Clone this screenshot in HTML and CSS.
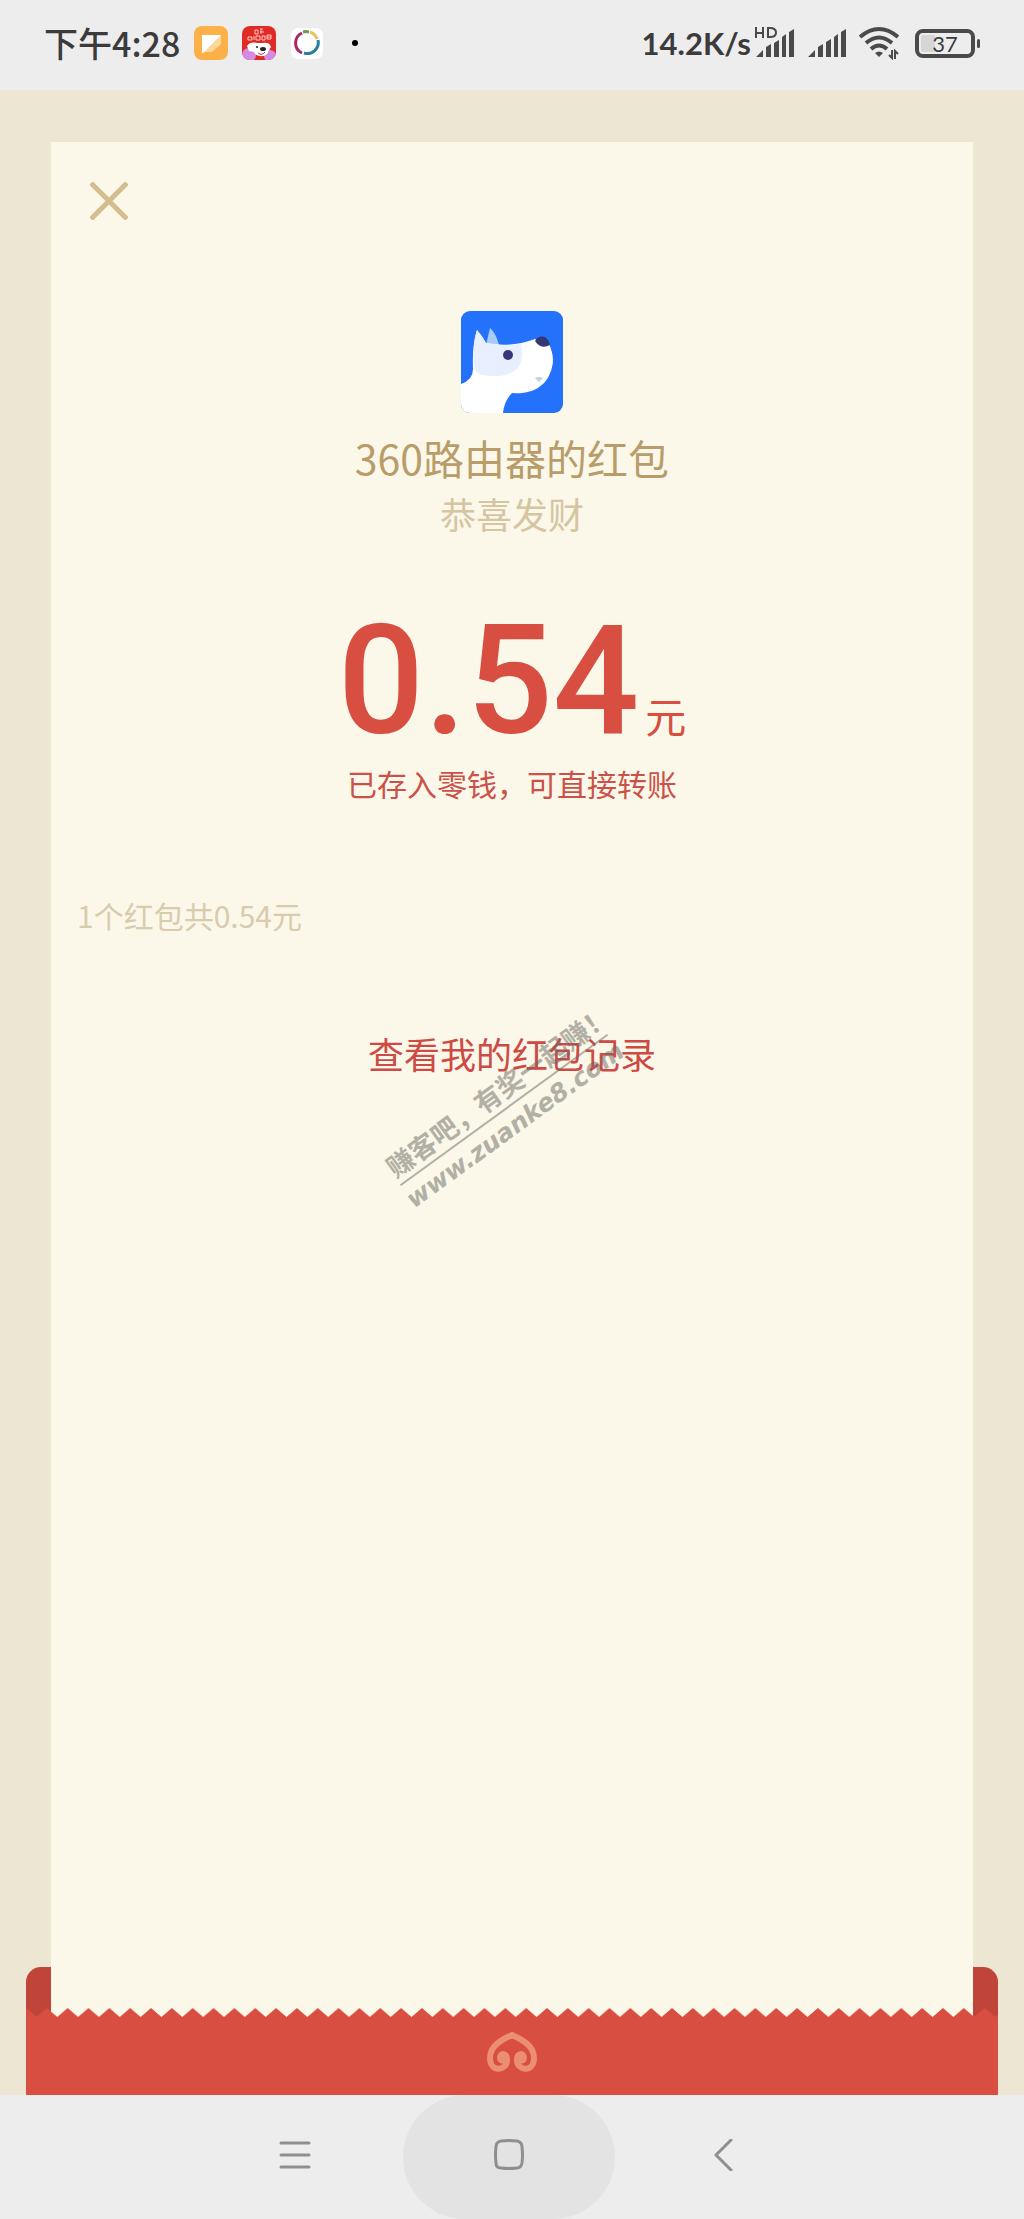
FILE: index.html
```html
<!DOCTYPE html>
<html lang="zh-CN">
<head>
<meta charset="utf-8">
<meta name="viewport" content="width=device-width, initial-scale=1">
<title>红包</title>
<link rel="stylesheet" href="styles.css">
</head>
<body>
<header class="status">
  <div class="status-left">
    <span class="time">下午4:28</span>
    <svg class="app" viewBox="0 0 34 34" aria-hidden="true">
      <rect width="34" height="34" rx="8" fill="#fbb04a"/>
      <path d="M8 9h19v9l-9 8H8z" fill="#fbd79b"/>
      <path d="M8 9h19L9 27H8z" fill="#fff"/>
    </svg>
    <svg class="app" viewBox="0 0 34 34" aria-hidden="true">
      <defs><clipPath id="app-clip"><rect width="34" height="34" rx="8"/></clipPath></defs>
      <g clip-path="url(#app-clip)">
        <rect width="34" height="34" fill="#e02a25"/>
        <path d="M13 4h3v4h-3zM18 3h3M18 6h4M19 3v5M6 11h4v3H6zM12 10v4M14 10h4v4h-4zM20 10h3v4h-3zM25 9h4v4h-4zM25 11h4" fill="none" stroke="#ffc9c0" stroke-width="1"/>
        <circle cx="7" cy="29" r="7" fill="#d58be4"/><circle cx="28" cy="30" r="6" fill="#d58be4"/>
        <path d="M5 20c2-4 7-4 10-3h6c4-1 7 0 8 4l-3 5c-1 6-13 5-14 0l-5-1z" fill="#fff"/>
        <circle cx="15" cy="21" r="1" fill="#222"/><ellipse cx="21" cy="23" rx="3" ry="2" fill="#222"/>
        <path d="M16 27q4 3 7-1" fill="none" stroke="#b33" stroke-width="1"/>
      </g>
    </svg>
    <svg class="app" viewBox="0 0 34 34" aria-hidden="true">
      <rect x="1" y="2" width="32" height="31" rx="7" fill="#fff"/>
      <g fill="none" stroke-width="3">
        <path d="M12 27A11 11 0 0 1 12 7" stroke="#b02367"/>
        <path d="M13 6A11 11 0 0 1 19 6" stroke="#6f9a4a"/>
        <path d="M20 6A11 11 0 0 1 27 13" stroke="#e5c560"/>
        <path d="M28 14A11 11 0 0 1 14 27" stroke="#27809d"/>
      </g>
    </svg>
    <i class="dot"></i>
  </div>
  <div class="status-right">
    <span class="speed">14.2K/s</span>
    <svg class="signal hd" viewBox="0 0 40 32" width="40" height="32" role="img" aria-label="HD">
      <path d="M1 0v11M8 0v11M1 6h7M13 1h2q6 0 6 4.500t-6 4.500h-2z" fill="none" stroke="#4a4a4a" stroke-width="2"/>
      <path d="M1 30l7-7v7zM11 30V20l5-3v13zM19 30V16l5-3v17zM27 30V10l4-3v23zM34 30V5l5-3v28z" fill="#4a4a4a"/>
    </svg>
    <svg class="signal" viewBox="0 0 40 32" width="40" height="32" aria-hidden="true">
      <path d="M1 30l7-7v7zM11 30V20l5-3v13zM19 30V15l5-3v18zM27 30V10l4-3v23zM34 30V5l5-3v28z" fill="#4a4a4a"/>
    </svg>
    <svg class="wifi" viewBox="0 0 40 34" width="40" height="34" aria-hidden="true">
      <g fill="none" stroke="#4a4a4a" stroke-width="4">
        <path d="M1 11Q20-5 39 11"/><path d="M7 17Q20 6 33 17"/><path d="M12 23Q20 16 28 23"/>
      </g>
      <path d="M16 27q4-3 8 0l-4 4z" fill="#4a4a4a"/>
      <path d="M33 24v8l-3-3M36 33v-8l3 3" fill="none" stroke="#4a4a4a" stroke-width="2"/>
    </svg>
    <span class="battery"><span class="battery-body">37</span><i class="battery-tip"></i></span>
  </div>
</header>

<main class="screen">
  <div class="envelope-back"></div>
  <section class="card">
    <button class="close" type="button" aria-label="关闭">
      <svg viewBox="0 0 38 38" width="38" height="38"><path d="M1 1L37 37M37 1L1 37" stroke="#d6bd90" stroke-width="5"/></svg>
    </button>
    <svg class="avatar" viewBox="0 0 102 102" width="102" height="102" aria-hidden="true">
      <defs><clipPath id="avatar-clip"><rect width="102" height="102" rx="9"/></clipPath></defs>
      <g clip-path="url(#avatar-clip)">
        <rect width="102" height="102" fill="#2472fb"/>
        <path d="M25 34L29 17Q35 22 38 34z" fill="#a9cbfb"/>
        <path d="M0 73Q12 69 12 58Q11 34 16 19Q22 26 25 32Q50 37 74 28L88 33Q94 46 91 56C87 75 71 84 51 82Q43 90 42 102H0z" fill="#fff"/>
        <path d="M16 19Q22 26 25 32Q42 36 60 33Q64 48 56 58Q44 68 21 64Q14 62 13 56Q11 34 16 19z" fill="#e8effe"/>
        <path d="M74 30Q77 24 84 26Q88 29 89 34Q80 39 74 30z" fill="#333a73"/>
        <circle cx="47" cy="44" r="5" fill="#363a78"/>
        <path d="M74 67q4-2 8 0l-4 4z" fill="#b9d4e8"/>
      </g>
    </svg>
    <h1 class="sender">360路由器的红包</h1>
    <p class="wish">恭喜发财</p>
    <p class="amount"><span class="value">0.54</span><span class="unit">元</span></p>
    <p class="saved">已存入零钱，可直接转账</p>
    <p class="count">1个红包共0.54元</p>
    <div class="records">
      <a class="records-link" href="#">查看我的红包记录</a>
      <div class="watermark"><span class="mark-slogan">赚客吧，有奖一起赚！</span><span class="mark-url">www.zuanke8.com</span></div>
    </div>
  </section>
  <svg class="zigzag" viewBox="0 0 972 9" preserveAspectRatio="none" aria-hidden="true">
    <defs><pattern id="teeth" width="20.84" height="9" patternUnits="userSpaceOnUse"><path d="M0 0L10.420 9L20.840 0V9H0z" fill="#d84e40"/></pattern></defs>
    <rect width="972" height="9" fill="url(#teeth)"/>
  </svg>
  <footer class="envelope-front">
    <svg viewBox="0 0 52 41" width="52" height="41" aria-hidden="true">
      <path d="M26 4C15 9 4 15 4 27C4 42 21 40 21 29C21 22 14 21 14 27C14 29 16 30 17 29M26 4C37 9 48 15 48 27C48 42 31 40 31 29C31 22 38 21 38 27C38 29 36 30 35 29" fill="none" stroke="#eb8e73" stroke-width="6" stroke-linejoin="round" stroke-linecap="round"/>
    </svg>
  </footer>
</main>

<nav class="nav">
  <button class="nav-button" type="button" aria-label="菜单"><svg viewBox="0 0 32 32" width="32" height="32"><path d="M2 4h28M2 16h28M2 28h28"/></svg></button>
  <button class="nav-button pressed" type="button" aria-label="主页"><svg viewBox="0 0 32 32" width="32" height="32"><path d="M8 2q8-1 16 0q5 1 5 6q1 8 0 16q-1 5-5 5q-8 1-16 0q-5 0-5-5q-1-8 0-16q0-5 5-6z"/></svg></button>
  <button class="nav-button" type="button" aria-label="返回"><svg viewBox="0 0 32 32" width="32" height="32"><path d="M24 1L9 16L24 31"/></svg></button>
</nav>
</body>
</html>
```
FILE: styles.css
```css
* { box-sizing: border-box; }

body {
  margin: 0;
  min-height: 100vh;
  display: flex;
  flex-direction: column;
  background: #ededed;
  font-family: "Noto Sans CJK SC", "Noto Sans", sans-serif;
}

h1, p { margin: 0; font-weight: 400; }
svg { display: block; flex: none; }
button { border: 0; padding: 0; background: none; }

/* Status bar */
.status {
  height: 90px;
  padding: 0 44px 4px;
  display: flex;
  justify-content: space-between;
  align-items: center;
  color: #3b3b3b;
}
.status-left, .status-right { display: flex; align-items: center; }
.status-left { gap: 14px; }
.status-right { gap: 12px; }
.time { font-size: 34px; line-height: 40px; font-weight: 500; }
.speed { font: 700 31px/40px Lato, sans-serif; }
.hd { margin-left: -8px; overflow: visible; }
.app { width: 34px; height: 34px; }
.dot { width: 6px; height: 6px; margin-left: 14px; border-radius: 50%; background: #000; }
.battery { display: flex; align-items: center; gap: 2px; margin-left: 4px; }
.battery-body {
  width: 60px;
  height: 29px;
  border: 4px solid #4a4a4a;
  border-radius: 8px;
  background: linear-gradient(to right, #d6d6d6 14px, transparent 14px) content-box;
  padding: 2px;
  font: 22px/17px Lato, sans-serif;
  text-align: center;
}
.battery-tip { width: 3px; height: 9px; border-radius: 2px; background: #4a4a4a; }

/* Opened envelope: the card stands between its back and its front */
.screen {
  flex: 1;
  display: grid;
  grid-template-columns: 26px 25px 1fr 25px 26px;
  grid-template-rows: 52px 1fr 41px 9px 78px;
  background: #ece6d2;
}
.envelope-back { grid-area: 3 / 2 / 6 / 5; background: #c1443b; border-radius: 15px 15px 0 0; }
.card {
  grid-area: 2 / 3 / 5 / 4;
  display: flex;
  flex-direction: column;
  align-items: center;
  background: #fbf8ea;
}
.zigzag { grid-area: 4 / 2 / 5 / 5; width: 100%; height: 9px; }
.envelope-front {
  grid-area: 5 / 2 / 6 / 5;
  display: flex;
  justify-content: center;
  align-items: flex-start;
  padding-top: 14px;
  background: #d84e40;
}

.close { align-self: flex-start; margin: 40px 0 0 39px; }
.avatar { margin-top: 91px; }
.sender { margin-top: 14px; font-size: 41px; line-height: 60px; color: #b89d6a; }
.wish { font-size: 36px; line-height: 52px; color: #d5c5a1; }
.amount {
  margin-top: 72px;
  display: flex;
  align-items: baseline;
  gap: 6px;
  color: #d84e40;
}
.value { font: 500 152px/140px Roboto, sans-serif; }
.unit { font-size: 41px; line-height: 60px; }
.saved { margin-top: 10px; font-size: 30px; line-height: 44px; color: #cb5149; }
.count { align-self: flex-start; margin: 88px 0 0 26px; font-size: 30px; line-height: 44px; color: #d9ccad; }
.records { position: relative; margin-top: 90px; }
.records-link { font-size: 36px; line-height: 52px; color: #ce4a45; text-decoration: none; }

.watermark {
  position: absolute;
  left: 8px;
  top: 46px;
  width: 256px;
  display: flex;
  flex-direction: column;
  align-items: center;
  transform: rotate(-36deg);
  color: #6b6a62;
  opacity: 0.5;
  font-weight: 700;
  white-space: nowrap;
}
.mark-slogan { width: 100%; border-bottom: 2px solid; font-size: 27px; line-height: 36px; }
.mark-url { font: italic 700 25px/36px "DejaVu Sans", sans-serif; }

/* System navigation */
.nav {
  height: 124px;
  padding-right: 6px;
  display: flex;
  justify-content: center;
  gap: 2px;
}
.nav-button {
  width: 212px;
  padding-bottom: 4px;
  display: flex;
  justify-content: center;
  align-items: center;
  border-radius: 62px;
}
.pressed { background: #e3e3e3; }
.nav-button path { fill: none; stroke: #8f8f8f; stroke-width: 3; stroke-linecap: round; stroke-linejoin: round; }
```
